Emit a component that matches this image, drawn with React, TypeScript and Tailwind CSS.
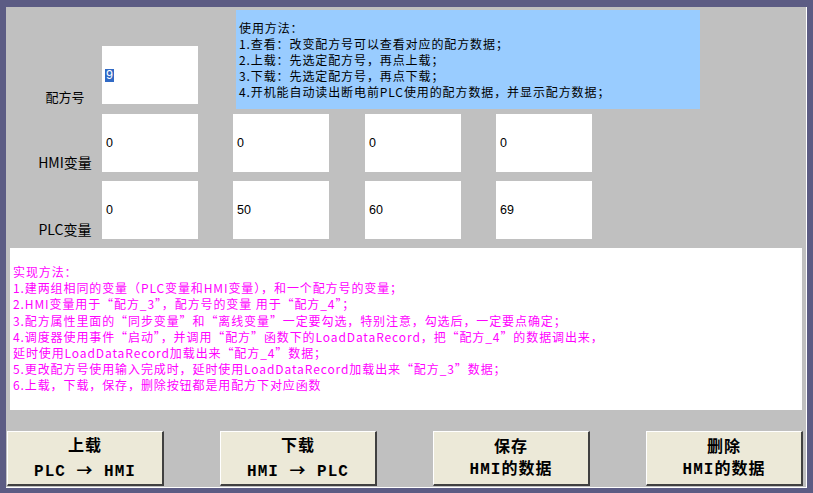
import React from "react";

const hmiValues = ["0", "0", "0", "0"];
const plcValues = ["0", "50", "60", "69"];

const usageLines = [
  "使用方法：",
  "1.查看：改变配方号可以查看对应的配方数据；",
  "2.上载：先选定配方号，再点上载；",
  "3.下载：先选定配方号，再点下载；",
  "4.开机能自动读出断电前PLC使用的配方数据，并显示配方数据；",
];

const noteLines = [
  "实现方法：",
  "1.建两组相同的变量（PLC变量和HMI变量），和一个配方号的变量；",
  "2.HMI变量用于“配方_3”，配方号的变量 用于“配方_4”；",
  "3.配方属性里面的“同步变量”和“离线变量”一定要勾选，特别注意，勾选后，一定要点确定；",
  "4.调度器使用事件“启动”，并调用“配方”函数下的LoadDataRecord，把“配方_4”的数据调出来，",
  "延时使用LoadDataRecord加载出来“配方_4”数据；",
  "5.更改配方号使用输入完成时，延时使用LoadDataRecord加载出来“配方_3”数据；",
  "6.上载，下载，保存，删除按钮都是用配方下对应函数",
];

const buttons = [
  { title: "上载", from: "PLC", to: "HMI" },
  { title: "下载", from: "HMI", to: "PLC" },
  { title: "保存", sub: "HMI的数据" },
  { title: "删除", sub: "HMI的数据" },
];

const cjk = { fontFamily: '"Noto Sans CJK SC", sans-serif' };
const mono = { fontFamily: '"Liberation Mono", "Noto Sans CJK SC", monospace' };

function ValueBox({ value }: { value: string }) {
  return (
    <div className="w-[96px] h-[58px] bg-white flex items-center pl-[4px] text-[12.5px] text-black" style={{ fontFamily: '"Liberation Sans", sans-serif' }}>
      {value}
    </div>
  );
}

function RowLabel({ text }: { text: string }) {
  return (
    <div className="self-end pl-[22px] pb-[3px] text-center text-[14px] leading-none text-black" style={cjk}>
      {text}
    </div>
  );
}

export default function App() {
  return (
    <div className="w-full h-screen bg-[#5c5c84] pl-[6px] pt-[7px]">
      <div className="w-[801px] h-[481px] bg-[#c0c0c0] border-r border-b border-white flex flex-col pt-[3px]">
        {/* Recipe fields */}
        <div className="grid grid-cols-[96px_131px_132px_131px_96px]">
          <div className="self-end pl-[22px] pb-[6px] text-center text-[13px] leading-none text-black" style={cjk}>
            配方号
          </div>
          <div className="self-end mb-[5px] w-[96px] h-[58px] bg-white flex items-center pl-[3px]">
            <span className="bg-[#316ac5] text-white text-[12.5px] leading-[13px] px-[1px]" style={{ fontFamily: '"Liberation Sans", sans-serif' }}>
              9
            </span>
          </div>
          <div className="col-span-3 ml-[3px] w-[464px] h-[99px] bg-[#99ccff] pt-[10px] pl-[3px] text-[12px] leading-4 tracking-[0.9px] text-black" style={cjk}>
            {usageLines.map((line, i) => (
              <div key={i} className="whitespace-nowrap">{line}</div>
            ))}
          </div>

          <RowLabel text="HMI变量" />
          {hmiValues.map((v, i) => (
            <div key={i} className="mt-[5px]">
              <ValueBox value={v} />
            </div>
          ))}

          <RowLabel text="PLC变量" />
          {plcValues.map((v, i) => (
            <div key={i} className="mt-[9px]">
              <ValueBox value={v} />
            </div>
          ))}
        </div>

        {/* Implementation notes */}
        <div className="mt-[9px] mx-[4px] h-[162px] bg-white pt-[16px] pl-[3px] text-[12px] leading-[16.2px] tracking-[0.9px] text-[#ff00ff]" style={cjk}>
          {noteLines.map((line, i) => (
            <div key={i} className="whitespace-pre">{line}</div>
          ))}
        </div>

        {/* Action buttons */}
        <div className="mt-[21px] ml-[1px] flex gap-[56px]">
          {buttons.map((b, i) => (
            <div
              key={i}
              className="w-[157px] h-[55px] bg-[#ece9d8] border-l border-t border-white border-r-2 border-b-2 border-r-[#404040] border-b-[#404040] flex flex-col items-center justify-center pt-[2px] text-[16px] leading-[22px] font-bold tracking-[1px] text-black"
              style={mono}
            >
              <div>{b.title}</div>
              {b.sub ? (
                <div>{b.sub}</div>
              ) : (
                <div className="whitespace-pre">
                  {b.from} <span style={cjk}>→</span> {b.to}
                </div>
              )}
            </div>
          ))}
        </div>
      </div>
    </div>
  );
}
